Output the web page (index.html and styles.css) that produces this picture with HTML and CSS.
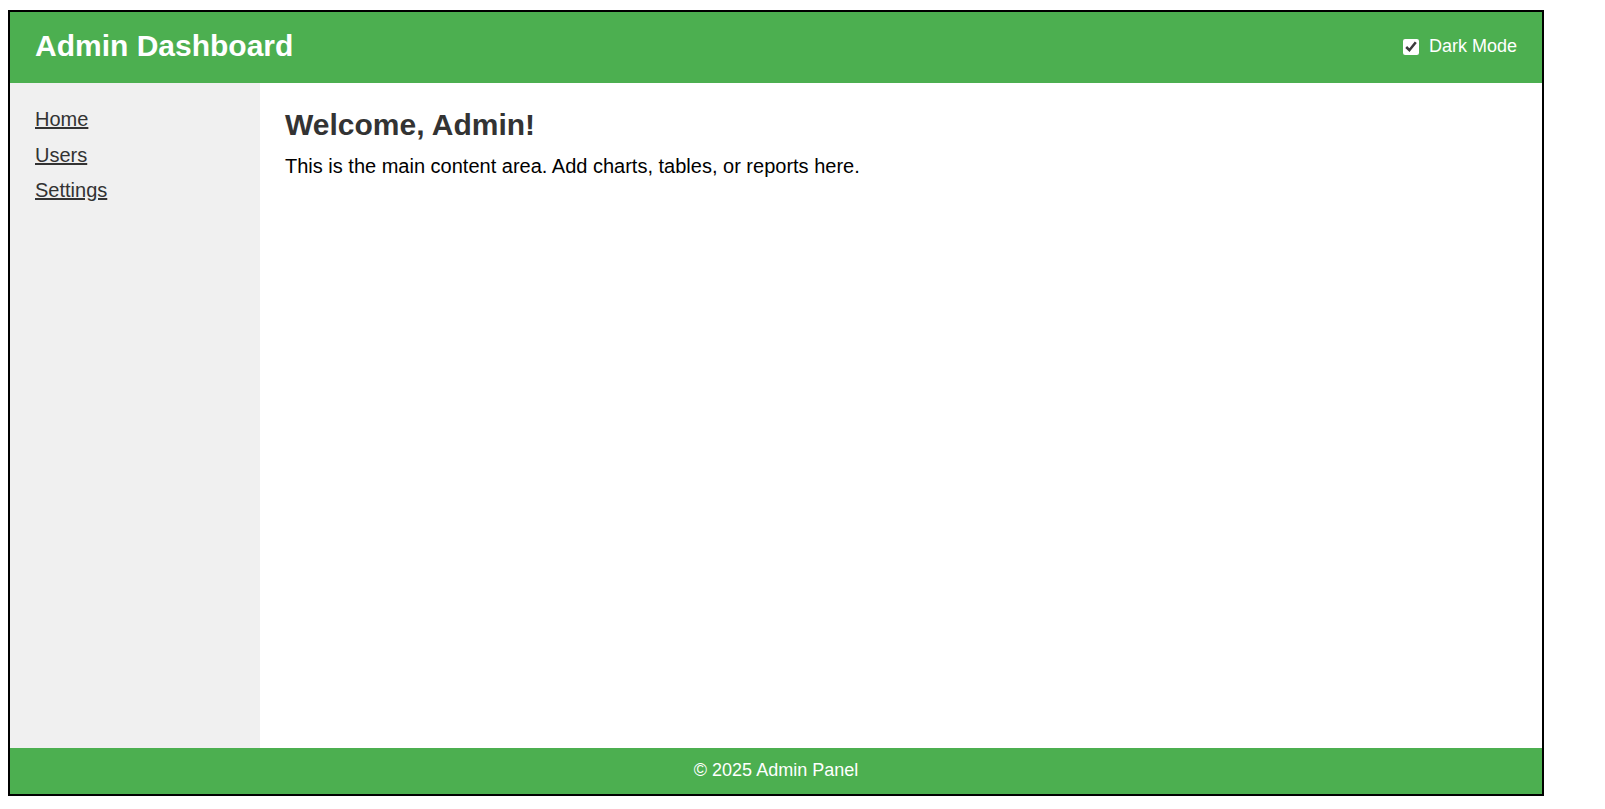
FILE: index.html
```html
<!DOCTYPE html>
<html lang="en">
<head>
<meta charset="utf-8">
<title>Admin Dashboard</title>
<link rel="stylesheet" href="styles.css">
</head>
<body>
<div class="frame">
  <header class="topbar">
    <h1 class="brand">Admin Dashboard</h1>
    <label class="toggle"><input type="checkbox" class="toggle-box" checked> Dark Mode</label>
  </header>
  <div class="body-row">
    <nav class="sidebar">
      <ul class="nav-list">
        <li class="nav-item"><a href="#" class="nav-link">Home</a></li>
        <li class="nav-item"><a href="#" class="nav-link">Users</a></li>
        <li class="nav-item"><a href="#" class="nav-link">Settings</a></li>
      </ul>
    </nav>
    <main class="content">
      <h2 class="welcome">Welcome, Admin!</h2>
      <p class="lead">This is the main content area. Add charts, tables, or reports here.</p>
    </main>
  </div>
  <footer class="bottombar">© 2025 Admin Panel</footer>
</div>
</body>
</html>
```
FILE: styles.css
```css
html, body {
  margin: 0;
  padding: 0;
  background: #fff;
}
body {
  padding: 10px 0 0 8px;
  font-family: "Liberation Sans", Arial, sans-serif;
}
.frame {
  width: 1532px;
  height: 782px;
  border: 2px solid #000;
  display: flex;
  flex-direction: column;
}
.topbar {
  background: #4caf50;
  color: #fff;
  height: 71px;
  box-sizing: border-box;
  padding: 0 25px;
  display: flex;
  align-items: center;
  justify-content: space-between;
}
.brand {
  margin: 0 0 4px 0;
  font-size: 30px;
  font-weight: bold;
  line-height: 35px;
}
.toggle {
  display: flex;
  align-items: center;
  font-size: 18px;
  line-height: 21px;
  margin-bottom: 2px;
}
.toggle-box {
  width: 16px;
  height: 16px;
  margin: 0 10px 0 0;
  accent-color: #fff;
}
.body-row {
  flex: 1;
  display: flex;
  min-height: 0;
}
.sidebar {
  width: 250px;
  background: #f0f0f0;
  box-sizing: border-box;
  padding: 25px;
}
.nav-list {
  list-style: none;
  margin: 0;
  padding: 0;
}
.nav-item {
  margin-bottom: 12.5px;
  font-size: 20px;
  line-height: 23px;
}
.nav-link {
  color: #333;
  text-decoration: underline;
}
.content {
  flex: 1;
  padding: 25px;
  color: #000;
}
.welcome {
  margin: 0 0 13px 0;
  font-size: 30px;
  line-height: 34px;
  color: #333;
}
.lead {
  margin: 0;
  font-size: 20px;
  line-height: 23px;
}
.bottombar {
  background: #4caf50;
  color: #fff;
  text-align: center;
  font-size: 18px;
  line-height: 21px;
  padding: 12px 0 13px;
}
```
